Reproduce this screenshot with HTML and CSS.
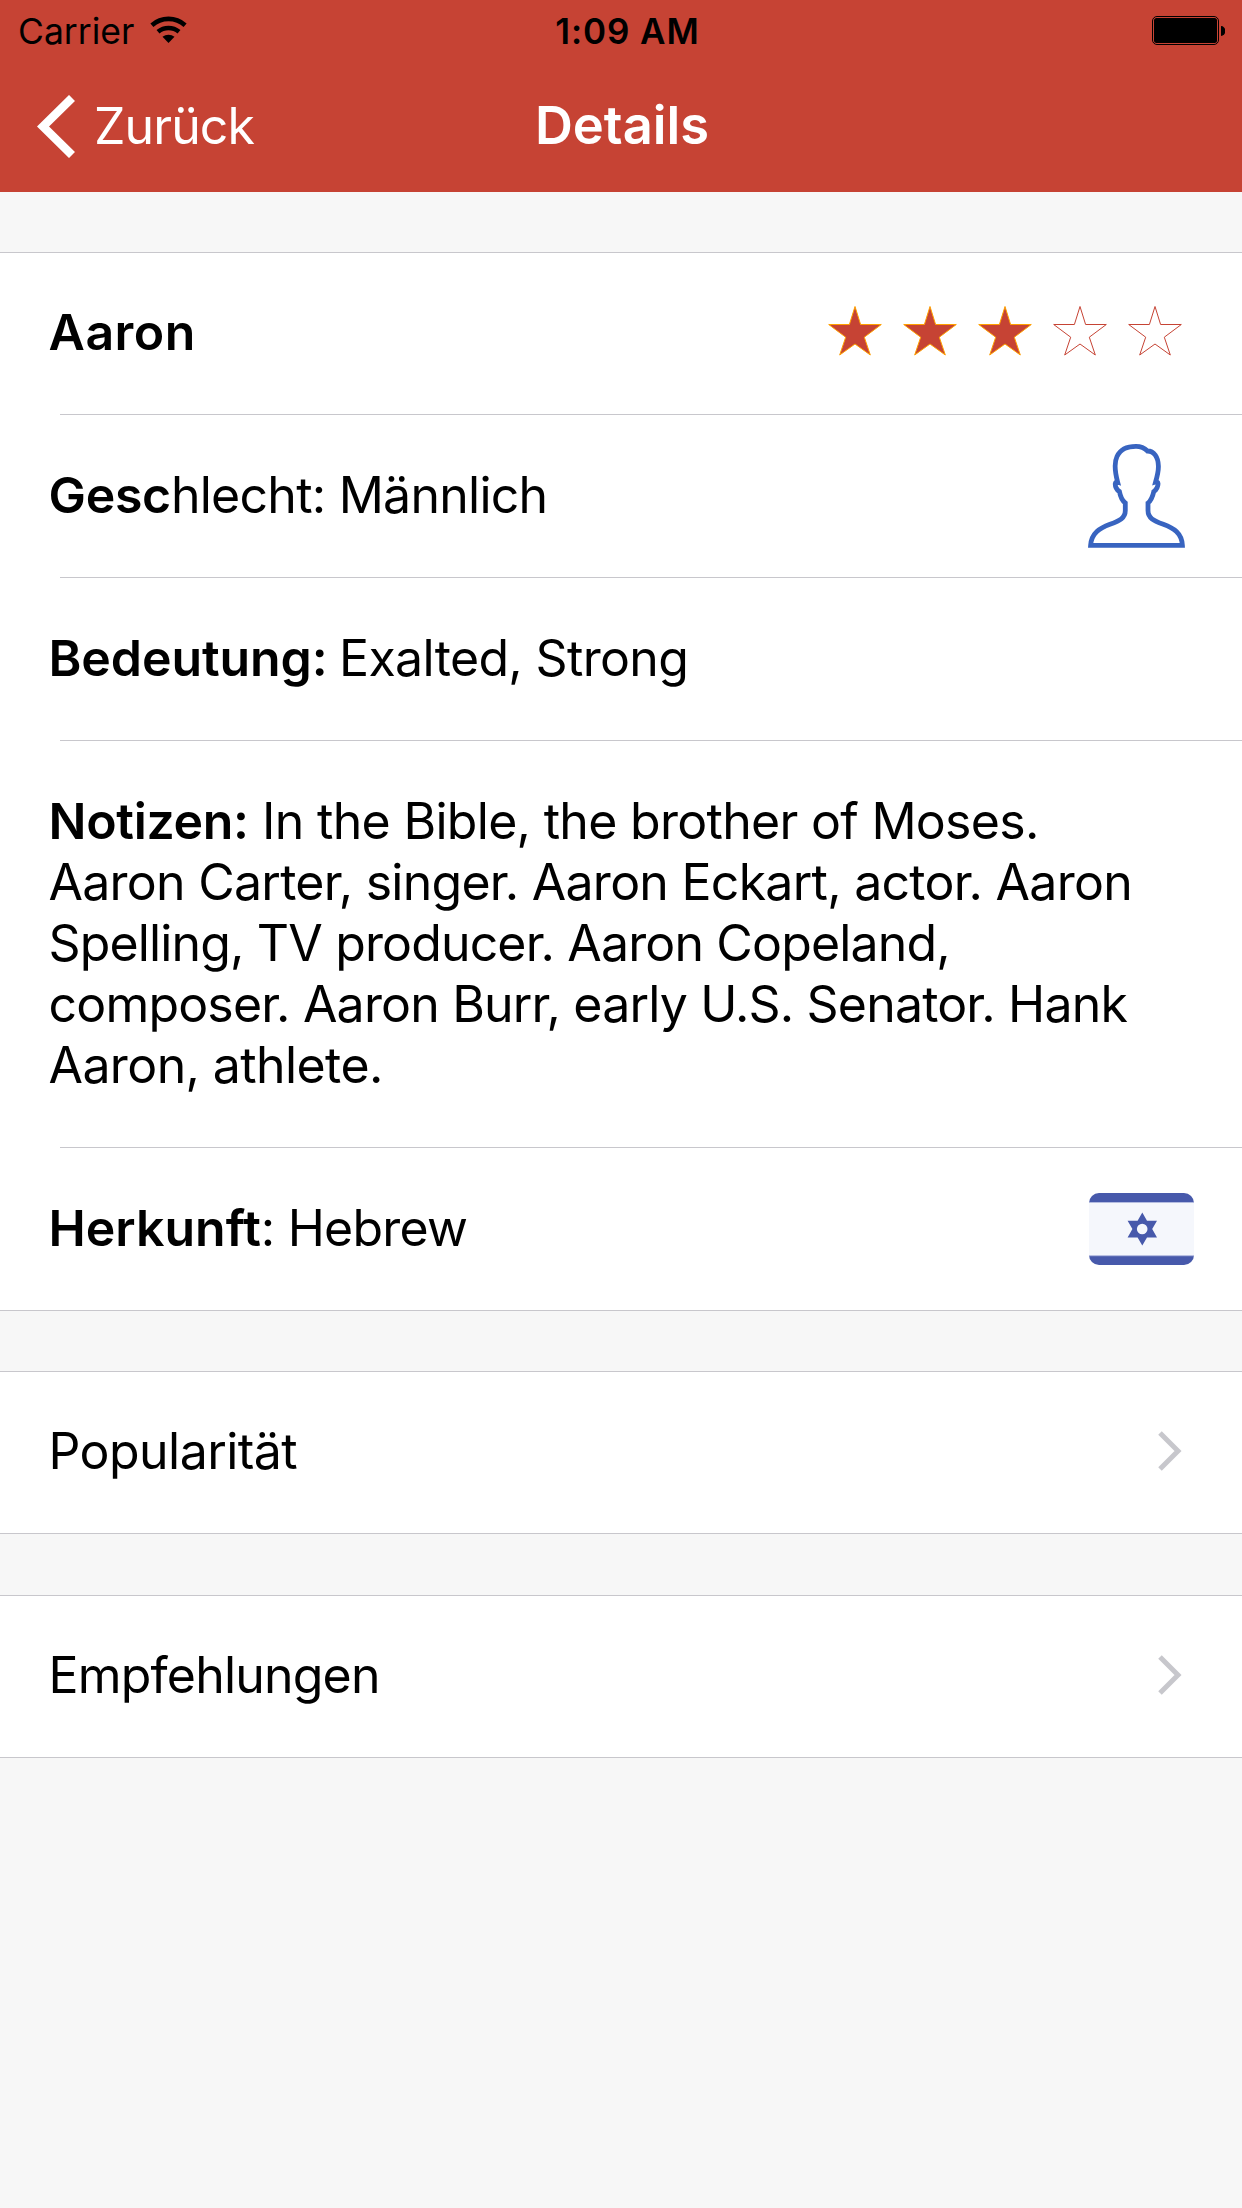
FILE: index.html
```
<!DOCTYPE html>
<html lang="de">
<head>
<meta charset="utf-8">
<title>Details</title>
<link rel="stylesheet" href="styles.css">
</head>
<body>
<header class="header">
  <div class="status">
    <div class="status-left">
      <span class="carrier">Carrier</span>
      <svg class="wifi" width="38" height="28" viewBox="0 0 38 28">
        <path d="M1.9 9.2A25 25 0 0 1 35.1 9.2" fill="none" stroke="#000" stroke-width="4.6"/>
        <path d="M8 15.8A16.5 16.5 0 0 1 29 15.8" fill="none" stroke="#000" stroke-width="4.6"/>
        <path d="M12.5 20.8A9.5 9.5 0 0 1 24.5 20.8L18.5 27Z"/>
      </svg>
    </div>
    <span class="time">1:09 AM</span>
    <div class="status-right">
      <svg width="73" height="29" viewBox="0 0 73 29">
        <rect x=".5" y=".5" width="66" height="28" rx="4.5" fill="none" stroke="#000"/>
        <rect x="2" y="2" width="63" height="25" rx="2.5"/>
        <path d="M69 10a4.2 4.8 0 0 1 0 10z"/>
      </svg>
    </div>
  </div>
  <nav class="navbar">
    <a class="back">
      <svg width="39" height="63" viewBox="0 0 39 63"><path d="M35 3L6 31.5L35 60" fill="none" stroke="#fff" stroke-width="8.5"/></svg>
      <span>Zurück</span>
    </a>
    <h1 class="title">Details</h1>
  </nav>
</header>
<main>
  <section class="group">
    <div class="row first">
      <b class="name">Aaron</b>
      <svg class="stars" width="355" height="52" viewBox="0 0 355 52">
        <defs><path id="star" d="M27 1.5L32.6 19.5H53.3L36.3 32.2L42.3 50L27 39L11.7 50L17.7 32.2L.7 19.5H21.4Z"/></defs>
        <g fill="#c64334" stroke="#ffa000">
          <use href="#star"/><use href="#star" x="75"/><use href="#star" x="150"/>
        </g>
        <g fill="none" stroke="#c64334">
          <use href="#star" x="225"/><use href="#star" x="300"/>
        </g>
      </svg>
    </div>
    <div class="separator"></div>
    <div class="row raised">
      <span class="gender"><b class="tight">Gesc</b>hlecht: Männlich</span>
      <svg class="person" width="98" height="104" viewBox="0 0 98 104">
        <path d="M2.6 101.4C3.5 89 12 84 22 80.3C32 76.5 37.3 74 37.3 66.5V59C34.5 57 32.3 52 31.4 47.5C28.5 46 27 42 27.3 39.5C27.6 38 28.5 37.6 29.6 38C27.5 30 25.8 19 29 12.5C33 4 40 2.4 48 2.4C53 2.4 56.5 4 59.5 7C66 7 70.2 13 70.4 22C70.6 27 69 33 67.6 38C69 37.6 69.9 38 70 39.5C70.2 42 68.5 46 65.8 47.5C64.8 52 62.5 57 60 59V66.5C60 74 65.3 76.5 75.3 80.3C85.5 84 93.7 89 94.4 101.4Z" fill="none" stroke="#3864c0" stroke-width="4.8"/>
      </svg>
    </div>
    <div class="separator"></div>
    <div class="row raised"><span><b class="meaning">Bedeutung:</b> <span class="wide">Exalted, Strong</span></span></div>
    <div class="separator"></div>
    <p class="notes"><span class="line1"><b class="tight">Notizen:</b> In the Bible, the brother of Moses.</span><br>Aaron Carter, singer. Aaron Eckart, actor. Aaron<br><span class="line3">Spelling, TV producer. Aaron Copeland,</span><br><span class="line4">composer. Aaron Burr, early U.S. Senator. Hank</span><br><span class="line5">Aaron, athlete.</span></p>
    <div class="separator"></div>
    <div class="row raised">
      <span class="origin"><b>Herkunft</b>: Hebrew</span>
      <svg class="flag" width="105" height="72" viewBox="0 0 105 72">
        <rect width="105" height="72" rx="10" fill="#4759ab"/>
        <path d="M0 9.5H105V62.7H0Z" fill="#f5f7fc"/>
        <path d="M0 9.5H105M0 62.7H105" stroke="#b4bce0"/>
        <path d="M53.3 19.5L58 27.8H68L63.2 36L68 44.6H58L53.3 52.5L48.6 44.6H38.6L43.4 36L38.6 27.8H48.6Z" fill="#4759ab"/>
        <circle cx="53.2" cy="36" r="5.3" fill="#f5f7fc"/>
      </svg>
    </div>
  </section>
  <section class="group second">
    <a class="row link"><span>Popularität</span>
      <svg class="chevron" width="24" height="40" viewBox="0 0 24 40"><path d="M2 2L20 20L2 38" fill="none" stroke="#c7c7cc" stroke-width="5"/></svg>
    </a>
  </section>
  <section class="group third">
    <a class="row link"><span class="tips">Empfehlungen</span>
      <svg class="chevron" width="24" height="40" viewBox="0 0 24 40"><path d="M2 2L20 20L2 38" fill="none" stroke="#c7c7cc" stroke-width="5"/></svg>
    </a>
  </section>
</main>
</body>
</html>
```
FILE: styles.css
```
* { box-sizing: border-box; }
body {
  margin: 0;
  min-height: 2208px;
  background: #f7f7f7;
  color: #000;
  font: 50px/61px Inter, "Liberation Sans", sans-serif;
  letter-spacing: -0.56px;
}
b { font-weight: 600; letter-spacing: 0; }
svg { display: block; flex: none; }

.header { height: 192px; background: #c64334; }
.status {
  display: grid;
  grid-template-columns: 1fr auto 1fr;
  height: 60px;
  padding: 0 17px 0 18px;
  font-size: 35.5px;
  line-height: 63px;
}
.status-left { display: flex; }
.carrier { letter-spacing: 0; }
.wifi { margin: 16px 0 0 16px; }
.time { font-size: 35px; font-weight: 600; letter-spacing: 0.9px; padding-left: 12px; }
.status-right { display: flex; justify-content: flex-end; padding-top: 16px; }

.navbar {
  display: grid;
  grid-template-columns: 1fr auto 1fr;
  height: 132px;
  color: #fff;
}
.back { display: flex; align-items: flex-start; padding: 35px 0 0 37px; letter-spacing: -0.9px; }
.back span { padding: 1px 0 0 18px; }
.title { margin: 0; padding: 35px 0 0 2px; font-size: 52.5px; font-weight: 600; letter-spacing: 0; }

.group { background: #fff; border: solid #c8c7cc; border-width: 1px 0; margin-top: 60px; }
.third { margin-top: 61px; }
.row {
  display: flex;
  align-items: center;
  justify-content: space-between;
  height: 162px;
  padding: 0 0 3px 48.5px;
}
.row.raised { padding-bottom: 1px; }
.row.first, .row.link { height: 161px; }
.separator { height: 1px; margin-left: 60px; background: #c8c7cc; }
.name { letter-spacing: 0.5px; }
.gender { letter-spacing: -0.75px; }
.tight { letter-spacing: -0.3px; }
.meaning { letter-spacing: -0.1px; margin-right: -2px; }
.wide { letter-spacing: -0.65px; }
.origin { letter-spacing: -0.8px; }
.notes { margin: 0; height: 406px; padding: 50px 48px 0 48.5px; letter-spacing: -0.74px; white-space: nowrap; }
.line1 { letter-spacing: -0.7px; }
.line3 { letter-spacing: -0.85px; }
.line4 { letter-spacing: -0.82px; }
.line5 { letter-spacing: -0.6px; }
.tips { letter-spacing: -0.8px; }

.stars { margin: 0 59px 3px 0; }
.person { margin: 1px 56px 0 0; }
.flag { margin: 1px 48px 0 0; }
.chevron { margin-right: 60px; }
```
